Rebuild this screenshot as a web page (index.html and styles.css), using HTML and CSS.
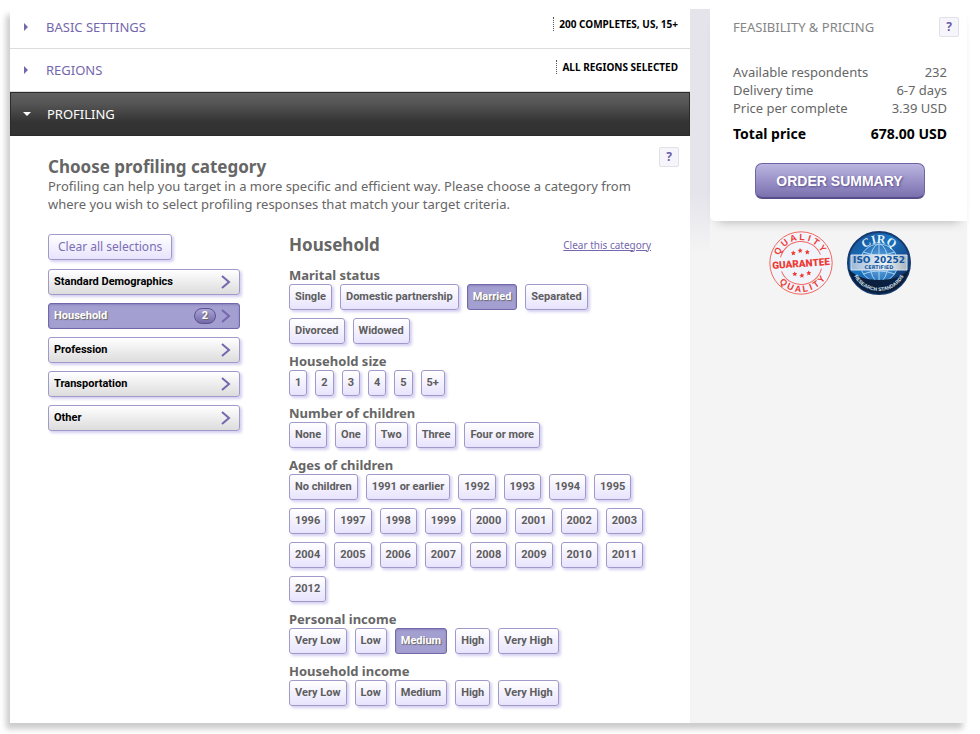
FILE: index.html
```
<!DOCTYPE html>
<html lang="en">
<head>
<meta charset="utf-8">
<meta name="viewport" content="width=device-width, initial-scale=1">
<title>Profiling</title>
<link rel="stylesheet" href="styles.css">
</head>
<body>
<div class="page">
  <main class="main">
    <section class="step">
      <a class="step-title" href="#basic"><svg class="arrow" viewBox="0 0 4 8" aria-hidden="true"><path d="M0 0L4 4L0 8Z"/></svg>BASIC SETTINGS</a>
      <span class="step-info">200 COMPLETES, US, 15+</span>
    </section>
    <section class="step">
      <a class="step-title" href="#regions"><svg class="arrow" viewBox="0 0 4 8" aria-hidden="true"><path d="M0 0L4 4L0 8Z"/></svg>REGIONS</a>
      <span class="step-info">ALL REGIONS SELECTED</span>
    </section>
    <section class="step step-open">
      <a class="step-title" href="#profiling"><svg class="arrow arrow-down" viewBox="0 0 8 4" aria-hidden="true"><path d="M0 0H8L4 4Z"/></svg>PROFILING</a>
    </section>

    <div class="content" id="profiling">
      <header class="intro">
        <div class="intro-text">
          <h1>Choose profiling category</h1>
          <p>Profiling can help you target in a more specific and efficient way. Please choose a category from where you wish to select profiling responses that match your target criteria.</p>
        </div>
        <button class="help" type="button" aria-label="Help">?</button>
      </header>

      <div class="columns">
        <nav class="categories">
          <button class="clear-all" type="button">Clear all selections</button>
          <button class="category" type="button">Standard Demographics<svg class="chevron" viewBox="0 0 10 14" aria-hidden="true"><path d="M1 1L8 7L1 13"/></svg></button>
          <button class="category selected" type="button">Household<span class="count">2</span><svg class="chevron" viewBox="0 0 10 14" aria-hidden="true"><path d="M1 1L8 7L1 13"/></svg></button>
          <button class="category" type="button">Profession<svg class="chevron" viewBox="0 0 10 14" aria-hidden="true"><path d="M1 1L8 7L1 13"/></svg></button>
          <button class="category" type="button">Transportation<svg class="chevron" viewBox="0 0 10 14" aria-hidden="true"><path d="M1 1L8 7L1 13"/></svg></button>
          <button class="category" type="button">Other<svg class="chevron" viewBox="0 0 10 14" aria-hidden="true"><path d="M1 1L8 7L1 13"/></svg></button>
        </nav>

        <section class="options">
          <div class="options-head">
            <h2>Household</h2>
            <a class="clear-category" href="#clear">Clear this category</a>
          </div>

          <h3>Marital status</h3>
          <div class="choices">
            <button type="button">Single</button>
            <button type="button">Domestic partnership</button>
            <button type="button" class="selected" aria-pressed="true">Married</button>
            <button type="button">Separated</button>
            <button type="button">Divorced</button>
            <button type="button">Widowed</button>
          </div>

          <h3>Household size</h3>
          <div class="choices">
            <button type="button">1</button>
            <button type="button">2</button>
            <button type="button">3</button>
            <button type="button">4</button>
            <button type="button">5</button>
            <button type="button">5+</button>
          </div>

          <h3>Number of children</h3>
          <div class="choices">
            <button type="button">None</button>
            <button type="button">One</button>
            <button type="button">Two</button>
            <button type="button">Three</button>
            <button type="button">Four or more</button>
          </div>

          <h3>Ages of children</h3>
          <div class="choices">
            <button type="button">No children</button>
            <button type="button">1991 or earlier</button>
            <button type="button">1992</button>
            <button type="button">1993</button>
            <button type="button">1994</button>
            <button type="button">1995</button>
            <button type="button">1996</button>
            <button type="button">1997</button>
            <button type="button">1998</button>
            <button type="button">1999</button>
            <button type="button">2000</button>
            <button type="button">2001</button>
            <button type="button">2002</button>
            <button type="button">2003</button>
            <button type="button">2004</button>
            <button type="button">2005</button>
            <button type="button">2006</button>
            <button type="button">2007</button>
            <button type="button">2008</button>
            <button type="button">2009</button>
            <button type="button">2010</button>
            <button type="button">2011</button>
            <button type="button">2012</button>
          </div>

          <h3>Personal income</h3>
          <div class="choices">
            <button type="button">Very Low</button>
            <button type="button">Low</button>
            <button type="button" class="selected" aria-pressed="true">Medium</button>
            <button type="button">High</button>
            <button type="button">Very High</button>
          </div>

          <h3>Household income</h3>
          <div class="choices">
            <button type="button">Very Low</button>
            <button type="button">Low</button>
            <button type="button">Medium</button>
            <button type="button">High</button>
            <button type="button">Very High</button>
          </div>
        </section>
      </div>
    </div>
  </main>

  <aside class="side">
    <section class="pricing">
      <header class="pricing-head">
        <h2>FEASIBILITY &amp; PRICING</h2>
        <button class="help" type="button" aria-label="Help">?</button>
      </header>
      <dl class="figures">
        <div><dt>Available respondents</dt><dd>232</dd></div>
        <div><dt>Delivery time</dt><dd>6-7 days</dd></div>
        <div><dt>Price per complete</dt><dd>3.39 USD</dd></div>
        <div class="total"><dt>Total price</dt><dd>678.00 USD</dd></div>
      </dl>
      <button class="order" type="button">ORDER SUMMARY</button>
    </section>

    <div class="badges">
      <svg class="badge" viewBox="0 0 64 64">
        <defs>
          <path id="q-top" d="M9 32A23 23 0 0 1 55 32"/>
          <path id="q-bottom" d="M3 32A29 29 0 0 0 61 32"/>
        </defs>
        <circle cx="32" cy="32" r="31.200" fill="#f1f4fb" stroke="#f4685f" stroke-width="1"/>
        <g transform="rotate(-4 32 32)">
          <path d="M12 25A21 21 0 0 1 52 25M12 39A21 21 0 0 0 52 39" fill="none" stroke="#f4685f" stroke-width="1"/>
          <g class="quality">
            <text><textPath href="#q-top" startOffset="50%">Q U A L I T Y</textPath></text>
            <text><textPath href="#q-bottom" startOffset="50%">Q U A L I T Y</textPath></text>
          </g>
          <text class="guarantee" x="32" y="36">GUARANTEE</text>
          <g fill="#ee3a34">
            <path id="star" d="M32 17l.8 1.600 1.700.2-1.300 1.200.4 1.800-1.600-.9-1.600.9.4-1.800-1.300-1.200 1.700-.2z"/>
            <use href="#star" x="-7" y="2"/><use href="#star" x="7" y="2"/>
            <use href="#star" x="0" y="25"/><use href="#star" x="-7" y="23"/><use href="#star" x="7" y="23"/>
          </g>
        </g>
      </svg>
      <svg class="badge" viewBox="0 0 64 64">
        <defs>
          <linearGradient id="blue" x1="0" y1="0" x2="1" y2="1"><stop offset="0" stop-color="#1b4b8f"/><stop offset=".4" stop-color="#1775c2"/><stop offset=".65" stop-color="#174f93"/><stop offset="1" stop-color="#0a1c3c"/></linearGradient>
          <linearGradient id="silver"><stop offset="0" stop-color="#9db9d6"/><stop offset=".6" stop-color="#eef4f8"/><stop offset="1" stop-color="#a9b5c0"/></linearGradient>
          <radialGradient id="globe"><stop offset="0" stop-color="#76b4e4"/><stop offset="1" stop-color="#2573bd"/></radialGradient>
          <path id="c-top" d="M12 32A20 20 0 0 1 52 32"/>
          <path id="c-bottom" d="M4 32A28 28 0 0 0 60 32"/>
        </defs>
        <circle cx="32" cy="32" r="31" fill="url(#blue)" stroke="#173c70" stroke-width="2"/>
        <circle cx="32" cy="32" r="19" fill="url(#globe)"/>
        <g fill="none" stroke="#a9d2ef" stroke-width="1">
          <circle cx="32" cy="32" r="19"/><ellipse cx="32" cy="32" rx="9" ry="19"/><path d="M32 13V51M16 21Q32 27 48 21M16 43Q32 37 48 43"/>
        </g>
        <path d="M1.600 38Q12 49 32 49T62.400 38A31 31 0 0 1 1.600 38Z" fill="#0b203f"/>
        <path d="M4 24H60V39H4Z" fill="url(#silver)" stroke="#d6e3ef" stroke-width="1"/>
        <text class="cirq"><textPath href="#c-top" startOffset="50%">CIRQ</textPath></text>
        <text class="iso" x="32" y="32">ISO 20252</text>
        <text class="certified" x="32" y="38">CERTIFIED</text>
        <text class="research"><textPath href="#c-bottom" startOffset="50%">RESEARCH STANDARDS</textPath></text>
      </svg>
    </div>
  </aside>
</div>
</body>
</html>
```
FILE: styles.css
```
* { box-sizing: border-box; }

body {
  margin: 0;
  padding: 9px 13px 11px 10px;
  background: #fff;
  color: #666;
  font: 13px/18px "Noto Sans", sans-serif;
}

h1, h2, h3, p, dl, dd { margin: 0; }
button { margin: 0; font: inherit; cursor: pointer; }
a { text-decoration: none; }

.page {
  display: grid;
  grid-template-columns: minmax(0, 1fr) 277px;
  box-shadow: -4px 6px 6px #ccc;
}

.main { background: #fff; }

/* Accordion steps */
.step {
  display: flex;
  justify-content: space-between;
  align-items: center;
  min-height: 43px;
  padding: 0 12px 0 14px;
  border-bottom: 1px solid #ddd;
}
.step:first-child {
  min-height: 40px;
  padding-bottom: 4px;
}
.step-title {
  display: flex;
  align-items: center;
  color: #7467ad;
}
.arrow {
  width: 4px;
  height: 8px;
  margin-right: 18px;
  fill: #7467ad;
}
.step-info {
  margin-bottom: 6px;
  padding-left: 5px;
  border-left: 1px dotted #555;
  color: #000;
  font-size: 10px;
  line-height: 14px;
  font-weight: 700;
}
.step-open {
  min-height: 44px;
  padding-left: 12px;
  border: 1px solid #2b2b2b;
  background: linear-gradient(#606060, #555 25%, #333 70%);
}
.step-open .step-title { color: #fff; }
.arrow-down {
  width: 8px;
  height: 4px;
  margin-right: 16px;
  fill: #fff;
}

/* Content */
.content { padding: 11px 11px 17px 38px; }
.intro {
  display: flex;
  justify-content: space-between;
  align-items: flex-start;
}
.intro-text {
  max-width: 600px;
  padding-top: 9px;
}
h1, .options h2 {
  font-size: 17px;
  line-height: 21px;
  font-weight: 700;
}
.help {
  flex: none;
  width: 20px;
  height: 20px;
  padding: 0;
  border: 1px solid #e2e2e6;
  border-radius: 2px;
  background: #f6f5fb;
  color: #6a5ca8;
  font-size: 12px;
  line-height: 18px;
  font-weight: 700;
}

.columns {
  display: grid;
  grid-template-columns: 192px minmax(0, 1fr);
  gap: 49px;
  padding: 21px 28px 0 0;
}

.categories {
  display: flex;
  flex-direction: column;
  gap: 8px;
}
.clear-all, .category, .choices button {
  height: 26px;
  border: 1px solid #a09acb;
  border-radius: 3px;
  box-shadow: 2px 2px 3px #d3cff0;
}
.clear-all, .choices button { background: linear-gradient(#fff, #e8e3fd); }
.clear-all {
  align-self: flex-start;
  margin-bottom: 1px;
  padding: 0 9px;
  color: #7b70b4;
  font-size: 12px;
}
.category {
  display: flex;
  align-items: center;
  padding: 0 8px 0 5px;
  background: linear-gradient(#fff, #dcdcdc);
  color: #000;
  font: 700 11px/16px Roboto, sans-serif;
}
.chevron {
  width: 10px;
  height: 14px;
  margin-left: auto;
  fill: none;
  stroke: #7467ad;
  stroke-width: 2;
}
.count {
  width: 22px;
  height: 16px;
  margin-left: auto;
  border: 1px solid #5c5291;
  border-radius: 8px;
  background: linear-gradient(#aaa4d4, #746aa9);
  line-height: 14px;
  text-align: center;
}
.count + .chevron { margin-left: 5px; }

.options-head {
  display: flex;
  justify-content: space-between;
  align-items: center;
  margin-bottom: 11px;
}
.clear-category {
  color: #7467ad;
  font-size: 10px;
  line-height: 14px;
  text-decoration: underline;
}
h3 {
  font-size: 13px;
  line-height: 18px;
  font-weight: 700;
}
.choices {
  display: flex;
  flex-wrap: wrap;
  gap: 8px;
}
.choices + h3 { margin-top: 8px; }
.choices button {
  padding: 0 5px;
  color: #5d5d5d;
  font: 700 11px/16px Roboto, sans-serif;
}
.category.selected, .choices button.selected {
  border-color: #7167aa;
  background: #a39fd0;
  box-shadow: inset 0 1px 2px #8a83bd;
  color: #fff;
  text-shadow: 1px 1px 1px #666;
}

/* Side column */
.side {
  background: linear-gradient(#e5e4eb 75%, #f4f4f4) no-repeat 0 0 / 20px 245px #f4f4f4;
}
.pricing {
  display: flex;
  flex-direction: column;
  margin-left: 20px;
  padding: 8px 8px 22px 23px;
  border-bottom-left-radius: 5px;
  background: #fff;
  box-shadow: 0 8px 10px -8px #aaa;
}
.pricing-head {
  display: flex;
  justify-content: space-between;
  align-items: center;
}
.pricing h2 {
  color: #858585;
  font-size: 13px;
  font-weight: 400;
}
.figures { padding: 26px 12px 0 0; }
.figures div {
  display: flex;
  justify-content: space-between;
}
.figures .total {
  margin-top: 8px;
  color: #000;
  font-size: 14px;
  font-weight: 700;
}
.order {
  align-self: center;
  width: 170px;
  height: 36px;
  margin: 20px 13px 0 0;
  border: 1px solid #6f63a5;
  border-bottom: 2px solid #584d8b;
  border-radius: 7px;
  background: linear-gradient(#bbb6df, #9a92c8 50%, #7b70ae);
  color: #fff;
  font: 700 14px/18px "Liberation Sans", sans-serif;
  text-shadow: 1px 1px 2px #5b5190;
}

.badges {
  display: flex;
  justify-content: center;
  gap: 14px;
  padding: 10px 0 0 23px;
}
.badge {
  width: 64px;
  height: 64px;
}
.badge text { text-anchor: middle; }
.quality, .guarantee {
  fill: #ee3a34;
  font-family: "Liberation Sans", sans-serif;
  font-weight: 700;
}
.quality { font-size: 9px; }
.guarantee { font: 900 10px Roboto, sans-serif; }
.cirq {
  fill: #e8f2fa;
  font: 700 12px "Liberation Serif", serif;
}
.iso {
  fill: #12559f;
  font: 700 9px "DejaVu Sans", sans-serif;
}
.certified {
  fill: #12559f;
  font: 700 5px "DejaVu Sans", sans-serif;
}
.research {
  fill: #dce8f4;
  font: 700 5px "Liberation Sans", sans-serif;
}
```
